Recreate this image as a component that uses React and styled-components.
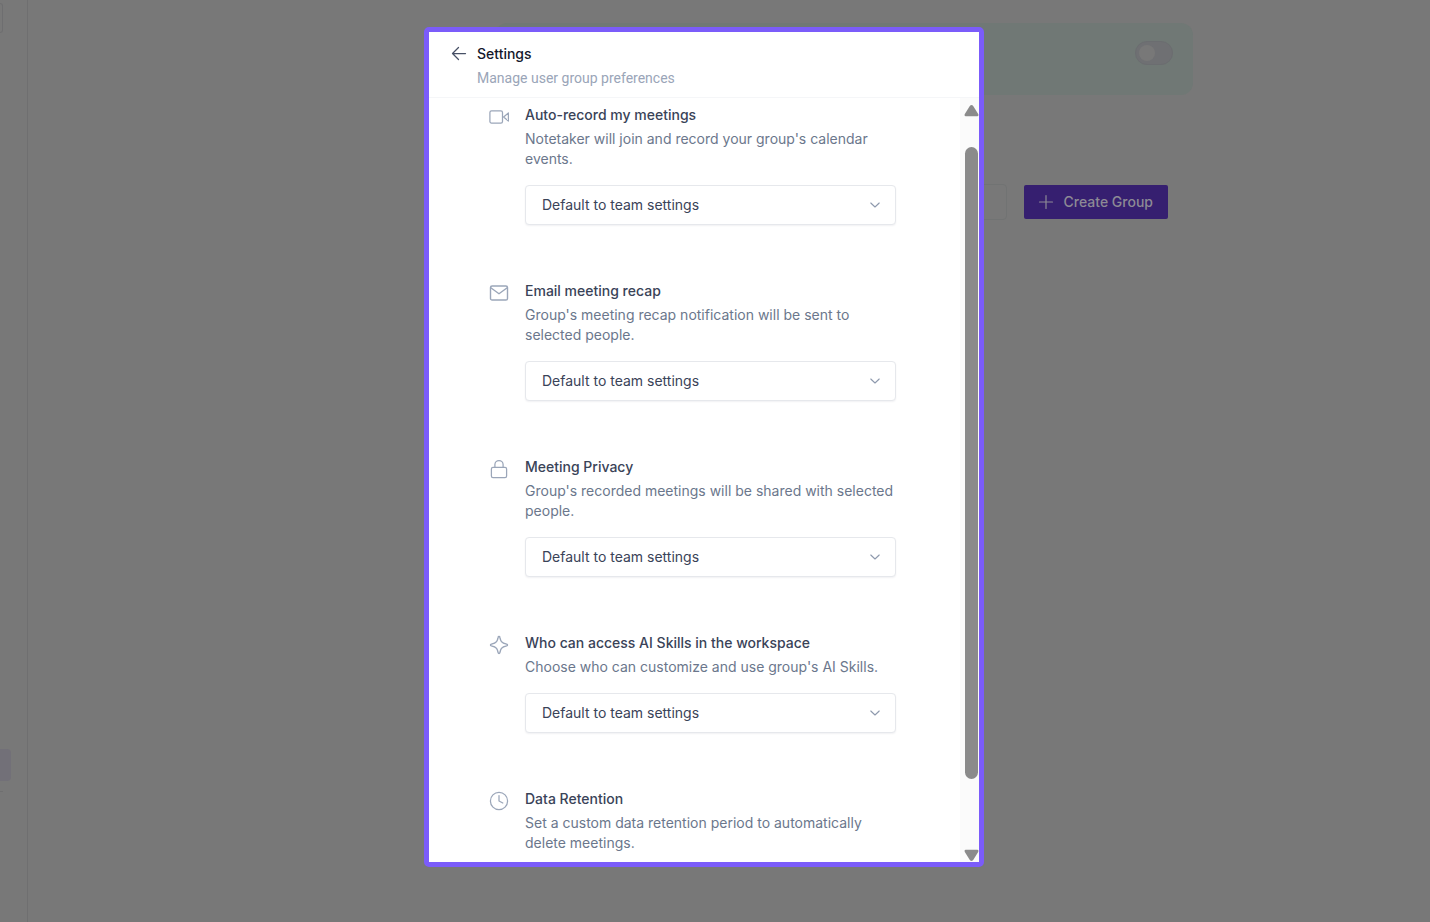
import React from 'react';
import styled, { createGlobalStyle } from 'styled-components';

const GlobalStyle = createGlobalStyle`
  *,
  *::before,
  *::after {
    box-sizing: border-box;
  }

  body {
    margin: 0;
    background: #787878;
    color: #3a4358;
    font-family: Inter, 'Liberation Sans', sans-serif;
    font-size: 14px;
    line-height: 20px;
  }

  h1,
  p {
    margin: 0;
  }
`;

const StyledPage = styled.div`
  display: flex;
  min-height: 100vh;
`;

const StyledSidebar = styled.aside`
  display: flex;
  flex-direction: column;
  flex: 0 0 28px;
  padding: 3px 0 130px;
  border-right: 1px solid #6f6f70;

  .workspace {
    width: 3px;
    height: 30px;
    border: 1px solid #6e6e70;
    border-left: 0;
    border-radius: 0 4px 4px 0;
  }

  .active-item {
    width: 11px;
    height: 32px;
    margin-top: auto;
    border-radius: 0 4px 4px 0;
    background: #727078;
  }

  .divider {
    width: 3px;
    height: 1px;
    margin-top: 10px;
    background: #6f6f70;
  }
`;

const StyledMain = styled.main`
  flex: 1;
  padding: 23px 237px 0 467px;
`;

const StyledBanner = styled.div`
  display: flex;
  justify-content: flex-end;
  align-items: flex-start;
  height: 72px;
  padding: 18px 20px;
  border-radius: 12px;
  background: #707875;
`;

const StyledToggle = styled.input`
  appearance: none;
  display: flex;
  align-items: center;
  width: 38px;
  height: 24px;
  margin: 0;
  padding: 0 3px;
  border: 1px solid #6b6d70;
  border-radius: 12px;
  background: #6f7073;

  &::before {
    content: '';
    width: 16px;
    height: 16px;
    border-radius: 50%;
    background: #787878;
  }
`;

const StyledToolbar = styled.div`
  display: flex;
  justify-content: flex-end;
  align-items: center;
  gap: 17px;
  margin-top: 89px;
  padding-right: 25px;
`;

const StyledSearch = styled.input`
  flex: 0 1 240px;
  min-width: 0;
  height: 36px;
  border: 1px solid #717373;
  border-radius: 4px;
  background: transparent;
`;

const StyledCreateButton = styled.button`
  display: flex;
  align-items: center;
  gap: 10px;
  height: 34px;
  padding: 0 15px 0 14px;
  border: 0;
  border-radius: 2px;
  background: #361f70;
  color: #8d8a95;
  font: 500 14px/20px Inter, sans-serif;
  white-space: nowrap;
`;

const StyledOverlay = styled.div`
  position: fixed;
  inset: 0;
  display: flex;
  justify-content: center;
  padding: 27px 22px 55px 0;
`;

const StyledDialog = styled.section`
  display: flex;
  flex-direction: column;
  width: 100%;
  max-width: 560px;
  overflow: hidden;
  border: 5px solid #7b5cfa;
  border-radius: 5px;
  background: #7b5cfa;
`;

const StyledHeader = styled.header`
  display: flex;
  gap: 10px;
  padding: 12px 22px 9px;
  border-bottom: 1px solid #f5f6f8;
  background: #fff;

  h1 {
    margin-bottom: 4px;
    color: #14182b;
    font-size: 14px;
    font-weight: 500;
    line-height: 20px;
  }

  p {
    color: #9aa5b8;
    font-family: Roboto, sans-serif;
  }
`;

const StyledBackButton = styled.button`
  display: flex;
  align-self: flex-start;
  margin: 2px 0;
  padding: 0;
  border: 0;
  background: none;
  color: #475066;
`;

const StyledBody = styled.div`
  display: flex;
  flex: 1;
  min-height: 0;
  background: #fff;
`;

const StyledList = styled.div`
  display: flex;
  flex: 1;
  flex-direction: column;
  gap: 56px;
  padding: 7px 64px 0 60px;
  overflow: hidden;
`;

const StyledSetting = styled.div`
  display: flex;
  gap: 16px;

  > svg {
    flex: none;
    margin-top: 2px;
    color: #9ba6b9;
  }

  .content {
    flex: 1;
  }

  label,
  .title {
    display: block;
    margin-bottom: 4px;
    color: #3a4358;
    font-weight: 500;
  }

  p {
    color: #6b778c;
  }
`;

const StyledSelectWrap = styled.div`
  display: grid;
  align-items: center;
  margin-top: 16px;

  > * {
    grid-area: 1 / 1;
  }

  svg {
    justify-self: end;
    margin-right: 15px;
    color: #8e99ad;
    pointer-events: none;
  }
`;

const StyledSelect = styled.select`
  appearance: none;
  width: 100%;
  height: 40px;
  padding: 0 40px 0 16px;
  border: 1px solid #e6e8ec;
  border-radius: 4px;
  background: #fff;
  box-shadow: 0 1px 2px rgba(20, 24, 43, 0.06);
  color: #3a4358;
  font: 400 14px/20px Inter, sans-serif;
`;

const StyledScrollbar = styled.div`
  display: flex;
  flex: 0 0 19px;
  flex-direction: column;
  align-items: center;
  padding: 7px 0 1px 4px;
  background: #fbfbfb;

  .thumb {
    flex: 1;
    width: 13px;
    margin: 30px 0 70px;
    border-radius: 7px;
    background: #8b8b8b;
  }
`;

const Icon = ({ size = 20, children, ...props }) => (
  <svg
    width={size}
    height={size}
    viewBox={`0 0 ${size} ${size}`}
    fill="none"
    stroke="currentColor"
    strokeWidth="1.25"
    strokeLinecap="round"
    strokeLinejoin="round"
    aria-hidden="true"
    {...props}>
    {children}
  </svg>
);

const icons = {
  video: (
    <Icon>
      <rect x="0.9" y="3.9" width="12.6" height="12.2" rx="1.6" />
      <path d="M14.6 10 19.4 6v8Z" />
    </Icon>
  ),
  mail: (
    <Icon strokeWidth="1.4">
      <rect x="1.5" y="3" width="17" height="14" rx="1.6" />
      <path d="m1.8 4.8 8.2 6 8.2-6" />
    </Icon>
  ),
  lock: (
    <Icon>
      <rect x="2.4" y="8.4" width="15.2" height="10.2" rx="1.6" />
      <path d="M5.9 8.4V5.6a4.1 4.1 0 0 1 8.2 0v2.8" />
    </Icon>
  ),
  sparkle: (
    <Icon strokeWidth="1.4">
      <path d="M10 1.5c.5 0 .8.3.9.9.7 3.3 1.1 5.5 6.700 6.7 1.200.3 1.200 1.500 0 1.800-5.600 1.200-6 3.400-6.700 6.700-.3 1.200-1.500 1.200-1.800 0-.7-3.300-1.100-5.500-6.700-6.700-1.200-.3-1.200-1.500 0-1.800 5.600-1.200 6-3.400 6.700-6.700.1-.6.4-.9.9-.9Z" />
    </Icon>
  ),
  clock: (
    <Icon>
      <circle cx="10" cy="10" r="8.6" />
      <path d="M10 4.6V10l3.8 2" />
    </Icon>
  ),
};

const settings = [
  {
    id: 'auto-record',
    icon: 'video',
    title: 'Auto-record my meetings',
    text: "Notetaker will join and record your group's calendar events.",
  },
  {
    id: 'recap',
    icon: 'mail',
    title: 'Email meeting recap',
    text: "Group's meeting recap notification will be sent to selected people.",
  },
  {
    id: 'privacy',
    icon: 'lock',
    title: 'Meeting Privacy',
    text: "Group's recorded meetings will be shared with selected people.",
  },
  {
    id: 'skills',
    icon: 'sparkle',
    title: 'Who can access AI Skills in the workspace',
    text: "Choose who can customize and use group's AI Skills.",
  },
  {
    id: 'retention',
    icon: 'clock',
    title: 'Data Retention',
    text: 'Set a custom data retention period to automatically delete meetings.',
    noSelect: true,
  },
];

const Setting = ({ id, icon, title, text, noSelect }) => (
  <StyledSetting>
    {icons[icon]}
    <div className="content">
      {noSelect ? <div className="title">{title}</div> : <label htmlFor={id}>{title}</label>}
      <p>{text}</p>
      {!noSelect && (
        <StyledSelectWrap>
          <StyledSelect id={id}>
            <option>Default to team settings</option>
          </StyledSelect>
          <Icon size={12} strokeWidth="1.1">
            <path d="m1.8 4 4.2 4 4.2-4" />
          </Icon>
        </StyledSelectWrap>
      )}
    </div>
  </StyledSetting>
);

const Scrollbar = () => (
  <StyledScrollbar aria-hidden="true">
    <svg width="15" height="12" viewBox="0 0 15 12" fill="#8b8b8b">
      <path d="M5.8 1Q7.5-.8 9.2 1L14.2 9Q15 11.2 13.2 11.2H1.8Q0 11.2.8 9Z" />
    </svg>
    <div className="thumb" />
    <svg width="15" height="12" viewBox="0 0 15 12" fill="#8b8b8b">
      <path d="M5.8 11Q7.5 12.8 9.2 11L14.2 3Q15 .8 13.2.8H1.8Q0 .8.8 3Z" />
    </svg>
  </StyledScrollbar>
);

const App = () => (
  <>
    <GlobalStyle />
    <StyledPage>
      <StyledSidebar>
        <div className="workspace" />
        <div className="active-item" />
        <div className="divider" />
      </StyledSidebar>
      <StyledMain>
        <StyledBanner>
          <StyledToggle type="checkbox" aria-label="Enable groups" />
        </StyledBanner>
        <StyledToolbar>
          <StyledSearch type="search" aria-label="Search groups" />
          <StyledCreateButton type="button">
            <Icon size={16} strokeWidth="1.2">
              <path d="M8 1.5v13M1.5 8h13" />
            </Icon>
            Create Group
          </StyledCreateButton>
        </StyledToolbar>
      </StyledMain>
    </StyledPage>
    <StyledOverlay>
      <StyledDialog role="dialog" aria-labelledby="dialog-title">
        <StyledHeader>
          <StyledBackButton type="button" aria-label="Back">
            <Icon size={16}>
              <path d="M14.5 7.5H1.5M7.5 1.5l-6 6 6 6" />
            </Icon>
          </StyledBackButton>
          <div>
            <h1 id="dialog-title">Settings</h1>
            <p>Manage user group preferences</p>
          </div>
        </StyledHeader>
        <StyledBody>
          <StyledList>
            {settings.map(item => (
              <Setting key={item.id} {...item} />
            ))}
          </StyledList>
          <Scrollbar />
        </StyledBody>
      </StyledDialog>
    </StyledOverlay>
  </>
);

export default App;
